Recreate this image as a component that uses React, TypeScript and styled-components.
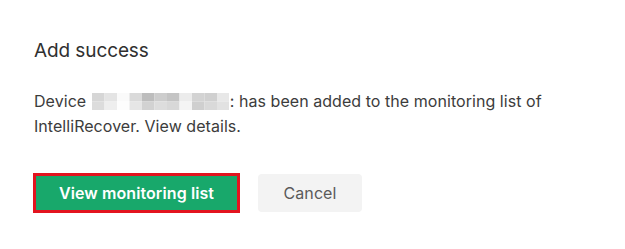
import React from "react";
import styled, { createGlobalStyle } from "styled-components";

const GlobalStyle = createGlobalStyle`
  html, body {
    margin: 0;
    padding: 0;
    background: #ffffff;
  }
  body {
    font-family: Inter, "Noto Sans", "Liberation Sans", sans-serif;
  }
`;

const Dialog = styled.div`
  width: 625px;
  height: 249px;
  box-sizing: border-box;
  padding: 39px 30px 0 33px;
  background: #ffffff;
`;

const Title = styled.h3`
  margin: 0 0 0 1px;
  font-size: 19px;
  line-height: 24px;
  font-weight: 400;
  color: #303030;
  letter-spacing: -0.1px;
`;

const Message = styled.p`
  margin: 26px 0 0 1px;
  width: 560px;
  font-size: 16px;
  line-height: 25px;
  font-weight: 400;
  color: #3c3c3c;
  letter-spacing: 0.05px;
`;

const Masked = styled.svg`
  display: inline-block;
  vertical-align: -3px;
  margin: 0 1px 0 1px;
`;

const Actions = styled.div`
  display: flex;
  align-items: center;
  gap: 18px;
  margin-top: 34px;
`;

const Button = styled.button<{ $primary?: boolean }>`
  box-sizing: border-box;
  height: ${(p) => (p.$primary ? "40px" : "38px")};
  padding: 0;
  width: ${(p) => (p.$primary ? "207px" : "104px")};
  font-family: inherit;
  font-size: 16px;
  font-weight: ${(p) => (p.$primary ? 600 : 400)};
  color: ${(p) => (p.$primary ? "#ffffff" : "#5a5a5a")};
  background: ${(p) => (p.$primary ? "#18a86b" : "#f3f3f3")};
  border: ${(p) => (p.$primary ? "3px solid #e3141f" : "none")};
  border-radius: ${(p) => (p.$primary ? "0" : "4px")};
  letter-spacing: 0.1px;
  cursor: pointer;
`;

// pixelated device name, as in the screenshot
const cells: string[][] = [
  ["#d6d6d6", "#e4e4e4", "#fafafa", "#dadada", "#bdbdbd", "#cdcdcd", "#c4c4c4", "#ececec", "#d3d3d3", "#d0d0d0", "#e8e8e8"],
  ["#dcdcdc", "#eeeeee", "#fdfdfd", "#e6e6e6", "#d2d2d2", "#dddddd", "#d8d8d8", "#f4f4f4", "#cfcfcf", "#d9d9d9", "#e2e2e2"],
];

const MaskedName = () => (
  <Masked width="137" height="17" viewBox="0 0 137 17">
    {cells.map((row, r) =>
      row.map((c, i) => (
        <rect key={`${r}-${i}`} x={i * 12.5} y={r * 8.5} width="12.5" height="8.5" fill={c} />
      ))
    )}
  </Masked>
);

export default function App() {
  return (
    <>
      <GlobalStyle />
      <Dialog>
        <Title>Add success</Title>
        <Message>
          Device <MaskedName />: has been added to the monitoring list of IntelliRecover. View details.
        </Message>
        <Actions>
          <Button $primary>View monitoring list</Button>
          <Button>Cancel</Button>
        </Actions>
      </Dialog>
    </>
  );
}
